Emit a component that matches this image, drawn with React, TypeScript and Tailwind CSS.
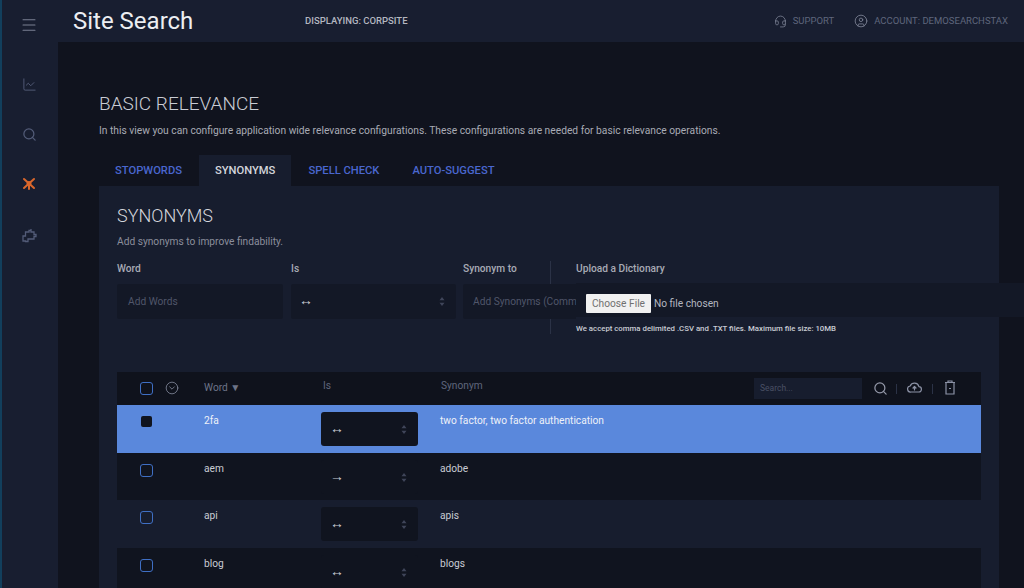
import React from 'react';
import { ChartLine, CircleChevronDown, CircleUser, Headset, Menu, Search } from 'lucide-react';

const tabs = ['STOPWORDS', 'SYNONYMS', 'SPELL CHECK', 'AUTO-SUGGEST'];

const rows = [
  { word: '2fa', arrow: '↔', synonym: 'two factor, two factor authentication', selected: true, rowClass: 'bg-[#5a88dc] h-[48px]' },
  { word: 'aem', arrow: '→', synonym: 'adobe', selected: false, rowClass: 'bg-[#10141f] h-[47px]' },
  { word: 'api', arrow: '↔', synonym: 'apis', selected: false, rowClass: 'bg-[#171d2e] h-[48px]' },
  { word: 'blog', arrow: '↔', synonym: 'blogs', selected: false, rowClass: 'bg-[#10141f] h-[47px]' },
];

const NetworkIcon = () => (
  <svg width="14" height="14" viewBox="0 0 14 14" fill="#d9672c" stroke="#d9672c" strokeWidth="2" strokeLinecap="round">
    <path d="M2 2l10 9M12 2L2 11M7 7v5" fill="none" />
    <circle cx="7" cy="6.5" r="1.5" />
  </svg>
);

const PluginIcon = () => (
  <svg width="15" height="15" viewBox="0 0 15 15" fill="none" stroke="#535c78" strokeWidth="1.3">
    <path d="M1 13V8h2.5V4H7V2.5h2V4h3v2.5h2v2h-2V11H6v2.5H3.5V13zM9 1v1.5" />
  </svg>
);

const CloudIcon = () => (
  <svg width="15" height="12" viewBox="0 0 15 12" fill="none" stroke="#8b91a5" strokeWidth="1.2" strokeLinecap="round" strokeLinejoin="round">
    <path d="M4 11h7.5a2.7 2.7 0 0 0 .4-5.4A4.6 4.6 0 0 0 3.2 5 3 3 0 0 0 4 11z" />
    <path d="M7.5 9V5.5M6 7l1.5-1.5L9 7" />
  </svg>
);

const TrashBoxIcon = () => (
  <svg width="12" height="15" viewBox="0 0 12 15" fill="none" stroke="#8b91a5" strokeWidth="1.2">
    <path d="M1 2.5h10M4 2.5V1h4v1.5M2 2.5V14h8V2.5M5 8.5h2" />
  </svg>
);

const SortArrows = () => (
  <svg width="6" height="9" viewBox="0 0 6 9" fill="#3f4559" className="shrink-0">
    <path d="M3 0l2.5 3.2h-5zM3 9L.5 5.8h5z" />
  </svg>
);

function Checkbox({ checked }: { checked: boolean }) {
  if (checked) {
    return <div className="ml-px h-[11px] w-[11px] rounded-[2px] bg-[#10141f]" />;
  }
  return <div className="h-[13px] w-[13px] rounded-[3px] border border-[#3f6fc4]" />;
}

export default function App() {
  return (
    <div className="flex h-[588px] w-[1024px] overflow-hidden bg-[#10131e] font-['Roboto',sans-serif]">
      <aside className="flex w-[58px] shrink-0 flex-col items-center border-l-2 border-[#123f5c] bg-[#181e30] pr-[2px]">
        <Menu className="mt-[16px] h-[18px] w-[18px] text-[#7a8092]" strokeWidth={1.4} />
        <ChartLine className="mt-[43px] h-[15px] w-[15px] text-[#535c78]" strokeWidth={1.5} />
        <Search className="mt-[35px] h-[15px] w-[15px] text-[#535c78]" strokeWidth={2} />
        <div className="mt-[35px]"><NetworkIcon /></div>
        <div className="mt-[37px]"><PluginIcon /></div>
      </aside>

      <div className="flex min-w-0 flex-1 flex-col">
        <header className="flex h-[42px] shrink-0 items-center bg-[#181e30] pl-[15px] pr-[16px]">
          <span className="w-[232px] text-[24px] leading-none text-[#eceef2]">Site Search</span>
          <span className="text-[9.5px] font-medium text-[#b4b7c0]">DISPLAYING: CORPSITE</span>
          <div className="ml-auto flex items-center gap-[6px] text-[9.5px] text-[#5f667c]">
            <Headset className="h-[13px] w-[13px] text-[#7a8092]" strokeWidth={1.5} />
            <span>SUPPORT</span>
            <CircleUser className="ml-[14px] h-[14px] w-[14px] text-[#7a8092]" strokeWidth={1.5} />
            <span>ACCOUNT: DEMOSEARCHSTAX</span>
          </div>
        </header>

        <main className="min-h-0 flex-1 pl-[41px] pr-[25px] pt-[51px]">
          <h1 className="text-[19px] leading-[22px] font-light text-[#c9ccd4]">BASIC RELEVANCE</h1>
          <p className="mt-[9px] text-[10.25px] leading-[13px] text-[#a8abb5]">
            In this view you can configure application wide relevance configurations. These configurations are needed for basic relevance operations.
          </p>

          <nav className="mt-[18px] flex h-[31px] pl-[16px] text-[11.2px] font-medium text-[#4a67cf]">
            {tabs.map(tab => (
              <div
                key={tab}
                className={tab === 'SYNONYMS'
                  ? 'flex items-center bg-[#171d2e] px-[16px] pt-[1px] text-[#d4d6dc]'
                  : 'flex items-center pr-[16px] pl-[17px] pt-[1px] first:pl-0 first:pr-[17px]'}
              >
                {tab}
              </div>
            ))}
          </nav>

          <section className="bg-[#171d2e] px-[18px] pt-[19px] pb-[10px]">
            <h2 className="text-[18px] leading-[22px] font-light text-[#d4d6dc]">SYNONYMS</h2>
            <p className="mt-[8px] text-[10.2px] leading-[13px] text-[#8b8e9c]">Add synonyms to improve findability.</p>

            <div className="mt-[14px] flex">
              <div className="w-[174px] shrink-0">
                <div className="text-[10.2px] leading-[13px] font-medium text-[#a8abb5]">Word</div>
                <div className="mt-[9px] flex h-[35px] w-[166px] items-center rounded-[2px] bg-[#131826] px-[11px] text-[10.2px] text-[#50566a]">Add Words</div>
              </div>
              <div className="w-[172px] shrink-0">
                <div className="text-[10.2px] leading-[13px] font-medium text-[#a8abb5]">Is</div>
                <div className="mt-[9px] flex h-[35px] w-[165px] items-center justify-between rounded-[2px] bg-[#131826] pl-[8px] pr-[11px]">
                  <span className="mb-[3px] text-[14px] leading-none text-[#c9ccd4]">↔</span>
                  <SortArrows />
                </div>
              </div>
              <div className="w-[87px] shrink-0">
                <div className="text-[10.2px] leading-[13px] font-medium text-[#a8abb5]">Synonym to</div>
                <div className="relative z-10 mt-[9px] flex h-[35px] w-[113px] items-center overflow-hidden rounded-l-[2px] bg-[#131826] px-[10px] text-[10.2px] whitespace-nowrap text-[#50566a]">Add Synonyms (Comma separated)</div>
              </div>
              <div className="relative mt-[-1px] flex h-[73px] w-[474px] shrink-0 flex-col border-l border-[#2b3246] pt-[1px]">
                <div className="pl-[25px] text-[10.2px] leading-[13px] font-medium text-[#a8abb5]">Upload a Dictionary</div>
                <div className="mt-[8px] ml-[25px] flex h-[35px] items-center bg-[#131826] pt-[7px] pl-[10px]">
                  <input
                    type="file"
                    className="text-[10.2px] text-[#b4b7c0] file:mr-[3px] file:h-[19px] file:w-[65px] file:rounded-[1px] file:border-0 file:bg-[#f1f1f1] file:text-[10.2px] file:text-[#707070]"
                  />
                </div>
                <div className="mt-[7px] pl-[25px] text-[7.8px] leading-[10px] font-medium text-[#c9ccd4]">We accept comma delimited .CSV and .TXT files. Maximum file size: 10MB</div>
              </div>
            </div>

            <div className="mt-[38px]">
              <div className="flex h-[33px] items-center bg-[#0f121c] pl-[23px] pr-[25px] text-[10.2px] text-[#5f667c]">
                <Checkbox checked={false} />
                <CircleChevronDown className="mb-[2px] ml-[12px] h-[14px] w-[14px] text-[#8b91a5]" strokeWidth={1.3} />
                <span className="mb-[1px] ml-[25px] w-[119px] text-[#6d7489]">Word ▼</span>
                <span className="mb-[5px] w-[118px]">Is</span>
                <span className="mb-[5px]">Synonym</span>
                <div className="ml-auto flex items-center">
                  <div className="flex h-[21px] w-[108px] items-center bg-[#171d2e] px-[6px] text-[8.5px] text-[#4a5064]">Search...</div>
                  <Search className="ml-[11px] h-[15px] w-[15px] text-[#9498a8]" strokeWidth={2} />
                  <div className="ml-[8px] h-[10px] w-px bg-[#2b3246]" />
                  <div className="mb-[3px] ml-[10px]"><CloudIcon /></div>
                  <div className="ml-[10px] h-[10px] w-px bg-[#2b3246]" />
                  <div className="mb-[2px] ml-[11px]"><TrashBoxIcon /></div>
                </div>
              </div>

              {rows.map(row => (
                <div key={row.word} className={`flex items-start text-[10.2px] leading-[13px] ${row.rowClass}`}>
                  <div className="mt-[11px] ml-[23px] flex w-[64px] shrink-0">
                    <Checkbox checked={row.selected} />
                  </div>
                  <div className={`mt-[9px] w-[117px] shrink-0 ${row.selected ? 'text-[#eef1f8]' : 'text-[#c9ccd4]'}`}>{row.word}</div>
                  <div className="mt-[7px] flex h-[34px] w-[97px] shrink-0 items-center justify-between rounded-[3px] bg-[#10141f] pl-[9px] pr-[11px]">
                    <span className="mb-[3px] text-[14px] leading-none text-[#c9ccd4]">{row.arrow}</span>
                    <SortArrows />
                  </div>
                  <div className={`mt-[9px] ml-[22px] ${row.selected ? 'text-[#eef1f8]' : 'text-[#c9ccd4]'}`}>{row.synonym}</div>
                </div>
              ))}
            </div>
          </section>
        </main>
      </div>
    </div>
  );
}
